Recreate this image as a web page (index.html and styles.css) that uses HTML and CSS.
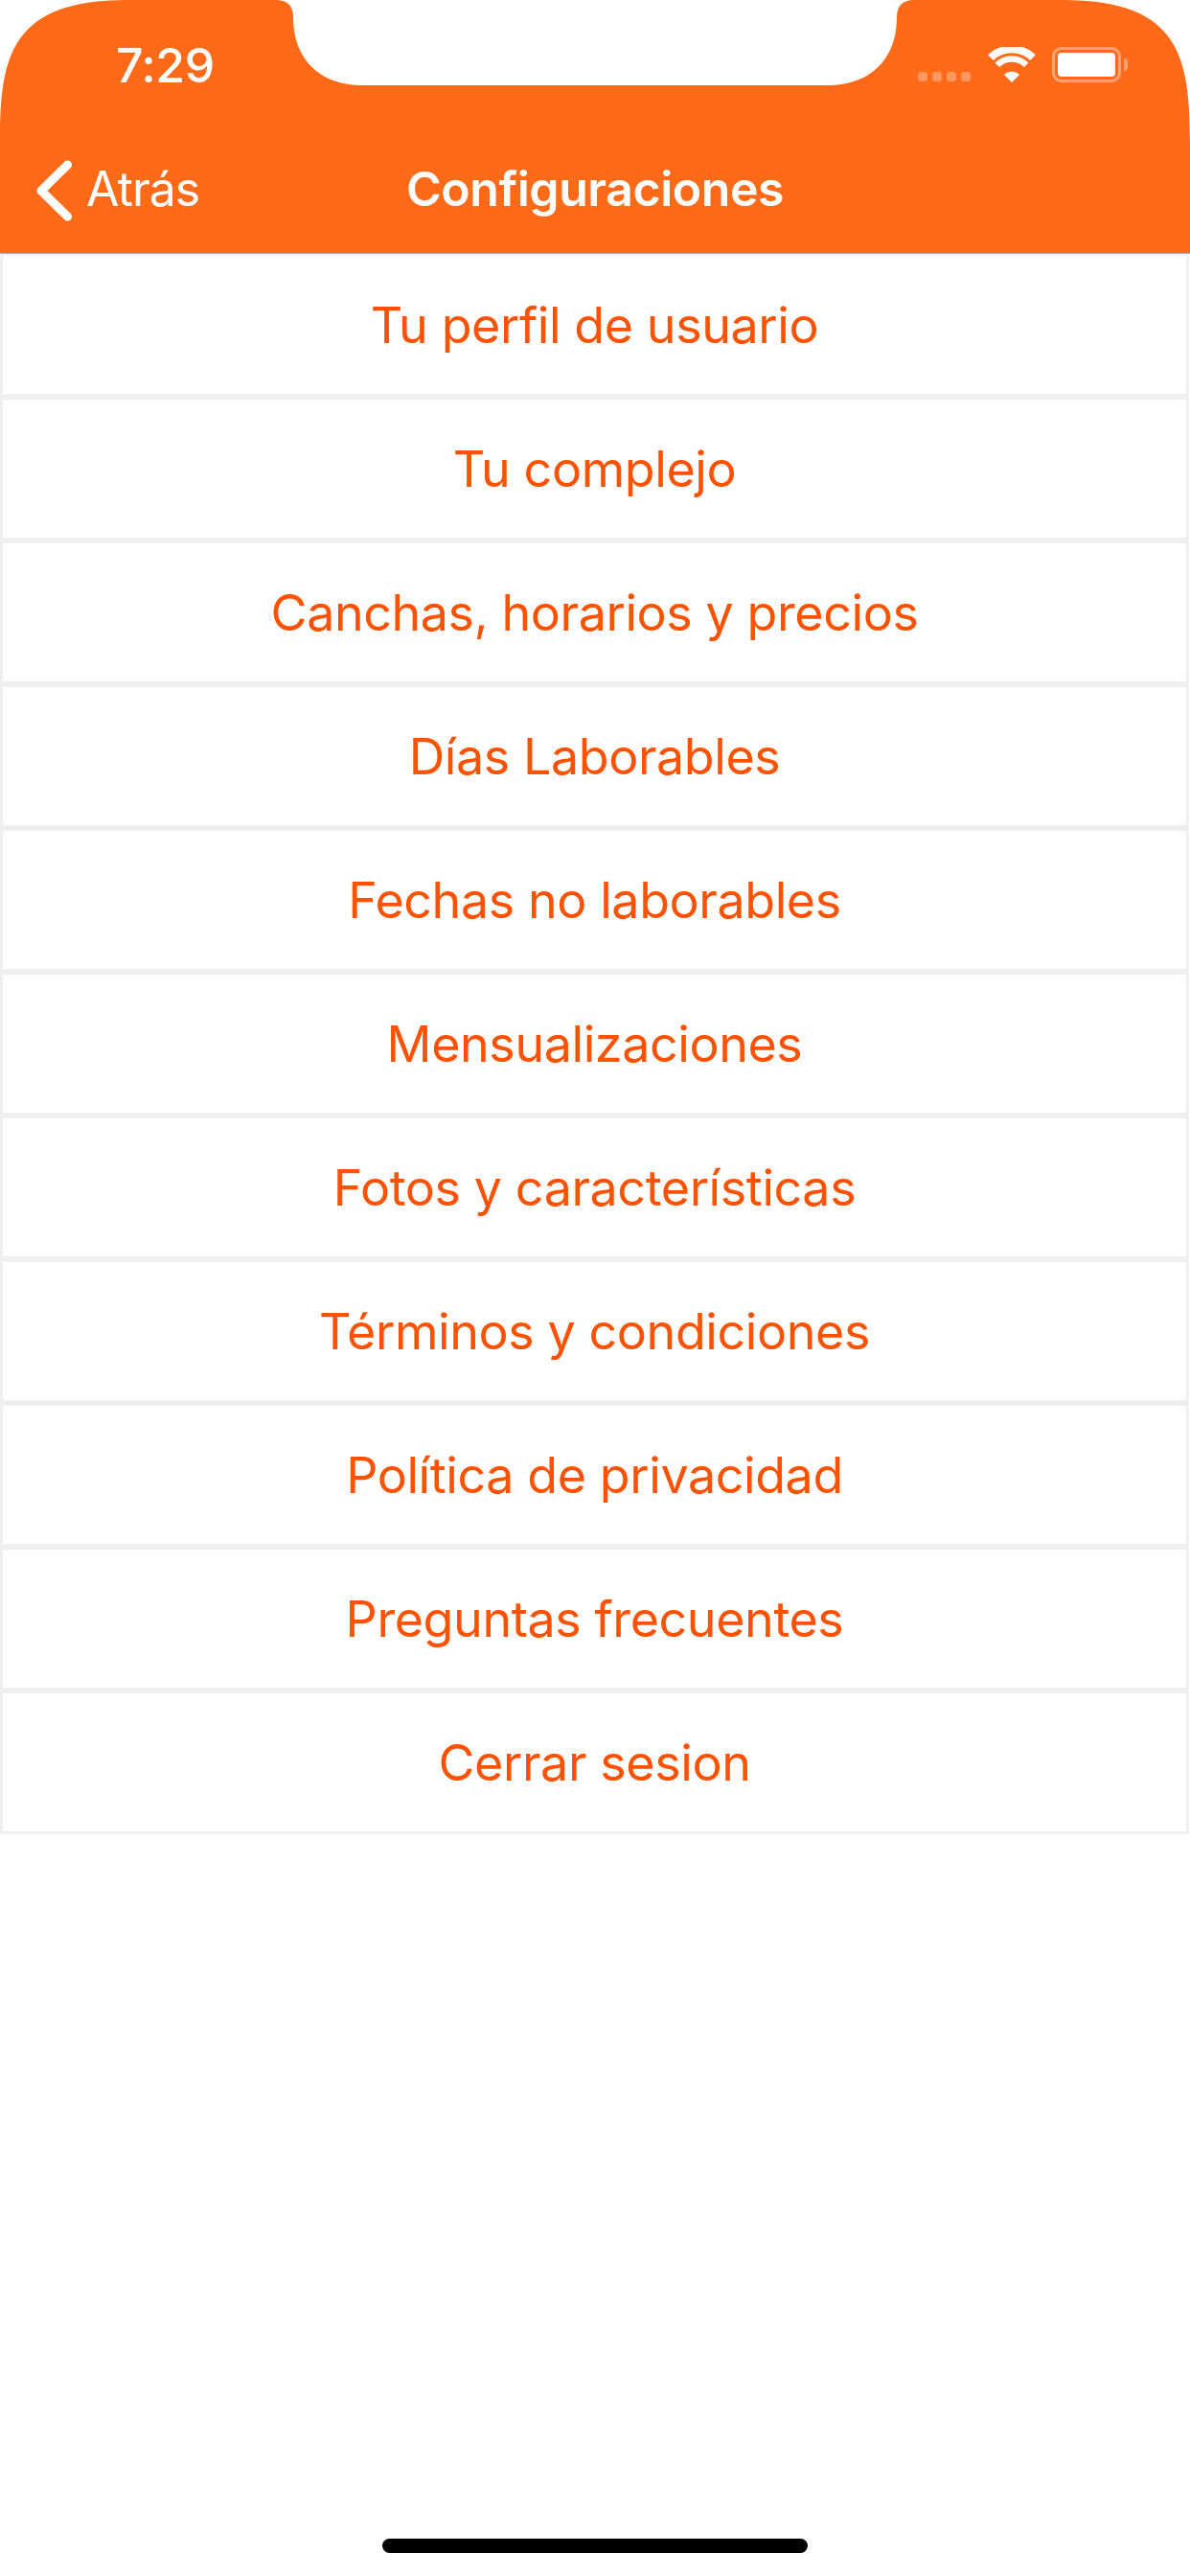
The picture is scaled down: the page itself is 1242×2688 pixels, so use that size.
FILE: index.html
```html
<!DOCTYPE html>
<html lang="es">
<head>
<meta charset="utf-8">
<title>Configuraciones</title>
<link rel="stylesheet" href="styles.css">
</head>
<body>
<div class="page">
  <header class="header">
    <svg class="header-shape" width="1242" height="264" viewBox="0 0 1242 264">
      <path fill="#ff6a19" d="M0 264V150C0 60 10 0 133 0H288C300 0 306 6 306 18C306 62 334 89 378 89H864C908 89 936 62 936 18C936 6 942 0 954 0H1109C1232 0 1242 60 1242 150V264Z"/>
    </svg>
    <div class="status">
      <span class="time">7:29</span>
      <div class="status-icons">
        <div class="signal"><i></i><i></i><i></i><i></i></div>
        <svg class="wifi" width="50" height="37" viewBox="0 0 50 37">
          <g fill="none" stroke="#fff">
            <path stroke-width="8" d="M2.9 11.2A32 32 0 0 1 47.1 11.2"/>
            <path stroke-width="6.5" d="M9.8 18.7A21.5 21.5 0 0 1 40.2 18.7"/>
          </g>
          <path fill="#fff" d="M25 37L17 29A11.5 11.5 0 0 1 33 29Z"/>
        </svg>
        <div class="battery"><div class="battery-level"></div></div>
        <div class="battery-nub"></div>
      </div>
    </div>
    <nav class="nav">
      <a class="back">
        <svg class="chevron" width="38" height="64" viewBox="0 0 38 64">
          <path fill="none" stroke="#fff" stroke-width="9" stroke-linecap="round" stroke-linejoin="round" d="M32.5 5L5 32L32.5 59"/>
        </svg>
        <span class="back-label">Atrás</span>
      </a>
      <h1 class="title">Configuraciones</h1>
    </nav>
  </header>
  <main class="list">
    <a class="row">Tu perfil de usuario</a>
    <a class="row">Tu complejo</a>
    <a class="row">Canchas, horarios y precios</a>
    <a class="row">Días Laborables</a>
    <a class="row">Fechas no laborables</a>
    <a class="row">Mensualizaciones</a>
    <a class="row">Fotos y características</a>
    <a class="row">Términos y condiciones</a>
    <a class="row">Política de privacidad</a>
    <a class="row">Preguntas frecuentes</a>
    <a class="row">Cerrar sesion</a>
  </main>
  <div class="home-indicator"></div>
</div>
</body>
</html>
```
FILE: styles.css
```css
* { box-sizing: border-box; }
html, body { margin: 0; padding: 0; background: #fff; }
.page {
  width: 1242px;
  height: 2688px;
  display: flex;
  flex-direction: column;
  font-family: Inter, "Liberation Sans", sans-serif;
  overflow: hidden;
}
.header {
  position: relative;
  height: 264px;
  flex: none;
  color: #fff;
}
.header-shape { position: absolute; left: 0; top: 0; }
.status {
  position: relative;
  height: 144px;
  padding: 42px 65px 0 121px;
  display: flex;
  justify-content: space-between;
  align-items: flex-start;
}
.time {
  font-size: 50px;
  line-height: 52px;
  font-weight: 500;
  letter-spacing: -0.4px;
}
.status-icons {
  display: flex;
  align-items: flex-start;
  padding-top: 7px;
}
.signal {
  display: flex;
  gap: 5px;
  margin-top: 26px;
  margin-right: 18px;
}
.signal i {
  display: block;
  width: 10px;
  height: 10px;
  border-radius: 3px;
  background: rgba(255, 255, 255, 0.3);
}
.wifi { margin-right: 17px; }
.battery {
  width: 72px;
  height: 37px;
  border: 3px solid rgba(255, 255, 255, 0.4);
  border-radius: 10px;
  padding: 3px;
}
.battery-level {
  width: 100%;
  height: 100%;
  background: #fff;
  border-radius: 4px;
}
.battery-nub {
  width: 4px;
  height: 13px;
  margin: 12px 0 0 3px;
  background: rgba(255, 255, 255, 0.4);
  border-radius: 0 4px 4px 0;
}
.nav {
  position: relative;
  height: 120px;
  display: flex;
  align-items: center;
  justify-content: center;
  padding-bottom: 14px;
}
.back {
  position: absolute;
  left: 38px;
  top: 21px;
  display: flex;
  align-items: center;
  gap: 14px;
}
.chevron { display: block; position: relative; top: 2px; }
.back-label {
  font-size: 50px;
  line-height: 60px;
  font-weight: 400;
  letter-spacing: -1px;
}
.title {
  margin: 0;
  font-size: 50px;
  line-height: 60px;
  font-weight: 600;
  letter-spacing: -0.45px;
}
.list {
  position: relative;
  flex: none;
  margin-right: 1px;
}
.list::before {
  content: "";
  position: absolute;
  left: 0;
  right: -1px;
  top: 0;
  height: 1px;
  background: #b5b5b5;
}
.row {
  display: flex;
  align-items: center;
  justify-content: center;
  height: 150px;
  border: 3px solid #efefef;
  color: #ff5200;
  font-size: 52px;
  line-height: 60px;
  letter-spacing: -0.42px;
  padding-top: 2px;
}
.home-indicator {
  flex: none;
  width: 444px;
  height: 15px;
  margin: auto auto 24px;
  background: #000;
  border-radius: 8px;
}
```
